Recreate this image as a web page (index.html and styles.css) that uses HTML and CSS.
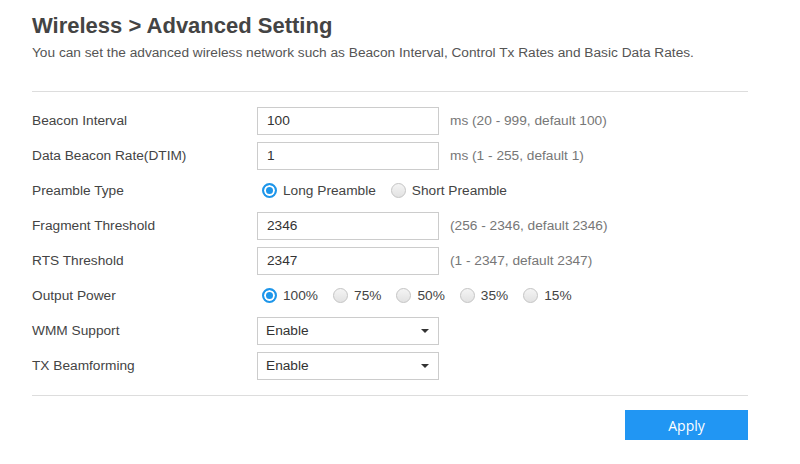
FILE: index.html
```html
<!DOCTYPE html>
<html lang="en">
<head>
    <meta charset="UTF-8">
    <title>Wireless - Advanced Setting</title>
    <link rel="stylesheet" href="styles.css">
</head>
<body>
    <div class="page">
        <h1>Wireless &gt; Advanced Setting</h1>
        <p class="intro">You can set the advanced wireless network such as Beacon Interval, Control Tx Rates and Basic Data Rates.</p>

        <form class="settings">
            <div class="row">
                <label>Beacon Interval</label>
                <div class="field">
                    <input type="text" class="text-input" value="100">
                    <span class="hint">ms (20 - 999, default 100)</span>
                </div>
            </div>
            <div class="row">
                <label>Data Beacon Rate(DTIM)</label>
                <div class="field">
                    <input type="text" class="text-input" value="1">
                    <span class="hint">ms (1 - 255, default 1)</span>
                </div>
            </div>
            <div class="row">
                <label>Preamble Type</label>
                <div class="field radios">
                    <label class="radio"><input type="radio" name="preamble" checked><span class="dot"></span>Long Preamble</label>
                    <label class="radio"><input type="radio" name="preamble"><span class="dot"></span>Short Preamble</label>
                </div>
            </div>
            <div class="row">
                <label>Fragment Threshold</label>
                <div class="field">
                    <input type="text" class="text-input" value="2346">
                    <span class="hint">(256 - 2346, default 2346)</span>
                </div>
            </div>
            <div class="row">
                <label>RTS Threshold</label>
                <div class="field">
                    <input type="text" class="text-input" value="2347">
                    <span class="hint">(1 - 2347, default 2347)</span>
                </div>
            </div>
            <div class="row">
                <label>Output Power</label>
                <div class="field radios">
                    <label class="radio"><input type="radio" name="power" checked><span class="dot"></span>100%</label>
                    <label class="radio"><input type="radio" name="power"><span class="dot"></span>75%</label>
                    <label class="radio"><input type="radio" name="power"><span class="dot"></span>50%</label>
                    <label class="radio"><input type="radio" name="power"><span class="dot"></span>35%</label>
                    <label class="radio"><input type="radio" name="power"><span class="dot"></span>15%</label>
                </div>
            </div>
            <div class="row">
                <label>WMM Support</label>
                <div class="field">
                    <div class="select">Enable<span class="caret"></span></div>
                </div>
            </div>
            <div class="row">
                <label>TX Beamforming</label>
                <div class="field">
                    <div class="select">Enable<span class="caret"></span></div>
                </div>
            </div>
        </form>

        <div class="actions">
            <button type="button" class="btn-apply">Apply</button>
        </div>
    </div>
</body>
</html>
```

FILE: styles.css
```css
/* Base */
body {
    margin: 0;
    background: #fff;
    font-family: Arial, "Liberation Sans", sans-serif;
    color: #444;
}

.page {
    width: 716px;
    padding: 13px 0 0 32px;
}

h1 {
    margin: 0;
    font-size: 22px;
    line-height: 26px;
    font-weight: bold;
    color: #444;
}

.intro {
    margin: 5px 0 0;
    font-size: 13.7px;
    line-height: 18px;
    color: #555;
}

/* Form rows */
.settings {
    margin-top: 29px;
    border-top: 1px solid #ddd;
    border-bottom: 1px solid #ddd;
    padding: 11px 0 12px;
}

.row {
    display: flex;
    align-items: center;
    height: 35px;
    font-size: 13.7px;
}

.row > label {
    width: 225px;
    color: #444;
}

.field {
    display: flex;
    align-items: center;
}

.text-input {
    box-sizing: border-box;
    width: 182px;
    height: 28px;
    border: 1px solid #ccc;
    padding: 0 9px;
    font-family: inherit;
    font-size: 13.7px;
    color: #333;
    outline: none;
}

.hint {
    margin-left: 11px;
    color: #777;
}

/* Radios */
.radio {
    display: flex;
    align-items: center;
    margin-left: 5px;
    margin-right: 10px;
    color: #444;
}

.radio input {
    display: none;
}

.dot {
    box-sizing: border-box;
    width: 15px;
    height: 15px;
    border-radius: 50%;
    border: 1px solid #c4c4c4;
    background: linear-gradient(#f4f4f4, #e2e2e2);
    margin-right: 6px;
}

.radio input:checked + .dot {
    border: 2px solid #1e96ea;
    background: #1e96ea;
    box-shadow: inset 0 0 0 2px #fff;
}

/* Select */
.select {
    box-sizing: border-box;
    width: 182px;
    height: 28px;
    border: 1px solid #ccc;
    padding: 0 8px;
    display: flex;
    align-items: center;
    justify-content: space-between;
    font-size: 13.7px;
    color: #333;
}

.caret {
    width: 0;
    height: 0;
    border-left: 4px solid transparent;
    border-right: 4px solid transparent;
    border-top: 4px solid #333;
    margin-right: 1px;
}

/* Apply */
.actions {
    display: flex;
    justify-content: flex-end;
    padding-top: 14px;
}

.btn-apply {
    width: 123px;
    height: 30px;
    border: none;
    background: #2196f3;
    color: #fff;
    font-family: "Open Sans", Arial, sans-serif;
    font-size: 14px;
}
```
